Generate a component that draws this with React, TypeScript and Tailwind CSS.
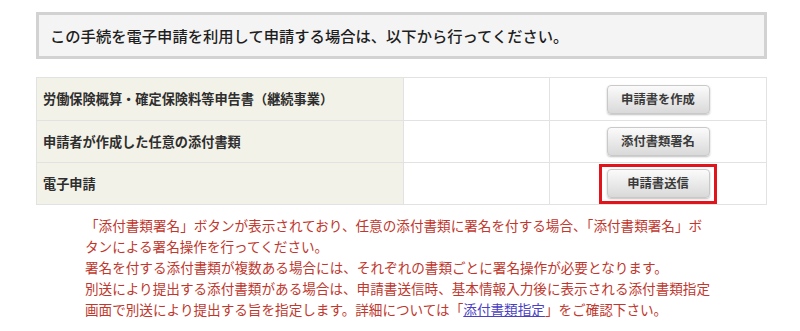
const rows = [
  { label: "労働保険概算・確定保険料等申告書（継続事業）", button: "申請書を作成" },
  { label: "申請者が作成した任意の添付書類", button: "添付書類署名" },
  { label: "電子申請", button: "申請書送信", highlight: true },
];

function GrayButton({ label }: { label: string }) {
  return (
    <button className="h-[29px] w-[103px] rounded-[4px] border border-[#c9c9c9] bg-gradient-to-b from-[#fbfbfb] to-[#d9d9d9] text-[12.3px] font-bold text-[#3a3a3a] shadow-[0_1px_2px_rgba(0,0,0,0.25)]">
      {label}
    </button>
  );
}

export default function App() {
  return (
    <div
      className="h-[331px] w-[800px] bg-white pt-[12px] pl-[36px]"
      style={{ fontFamily: '"Noto Sans CJK JP", "Noto Sans", sans-serif' }}
    >
      <div className="flex h-[47px] w-[731px] items-center border-[3px] border-[#d2d2d2] bg-[#f4f4f4] pl-[11px]">
        <p className="text-[15.3px] font-medium text-[#1e1e1e]">
          この手続を電子申請を利用して申請する場合は、以下から行ってください。
        </p>
      </div>

      <div className="mt-[18px] w-[731px] border border-[#e2e2e2]">
        {rows.map((row, i) => (
          <div
            key={row.label}
            className={`flex h-[42px] ${i > 0 ? "border-t border-[#e2e2e2]" : ""}`}
          >
            <div className="flex w-[366px] items-center bg-[#f3f2e8] pl-[6px] text-[13.2px] font-bold text-[#2e2e2e]">
              {row.label}
            </div>
            <div className="w-[146px] border-l border-[#e2e2e2]" />
            <div className="flex flex-1 items-center justify-center border-l border-[#e2e2e2]">
              {row.highlight ? (
                <div className="flex h-[40px] w-[118px] items-center justify-center border-[3px] border-[#e2141b]">
                  <GrayButton label={row.button} />
                </div>
              ) : (
                <GrayButton label={row.button} />
              )}
            </div>
          </div>
        ))}
      </div>

      <div className="mt-[10px] ml-[49px] text-[13.6px] leading-[21px] whitespace-nowrap text-[#c0372d]">
        <p>「添付書類署名」ボタンが表示されており、任意の添付書類に署名を付する場合、「添付書類署名」ボ</p>
        <p>タンによる署名操作を行ってください。</p>
        <p>署名を付する添付書類が複数ある場合には、それぞれの書類ごとに署名操作が必要となります。</p>
        <p>別送により提出する添付書類がある場合は、申請書送信時、基本情報入力後に表示される添付書類指定</p>
        <p>
          画面で別送により提出する旨を指定します。詳細については「
          <a href="#" className="text-[#4b3fc4] underline">
            添付書類指定
          </a>
          」をご確認下さい。
        </p>
      </div>
    </div>
  );
}
